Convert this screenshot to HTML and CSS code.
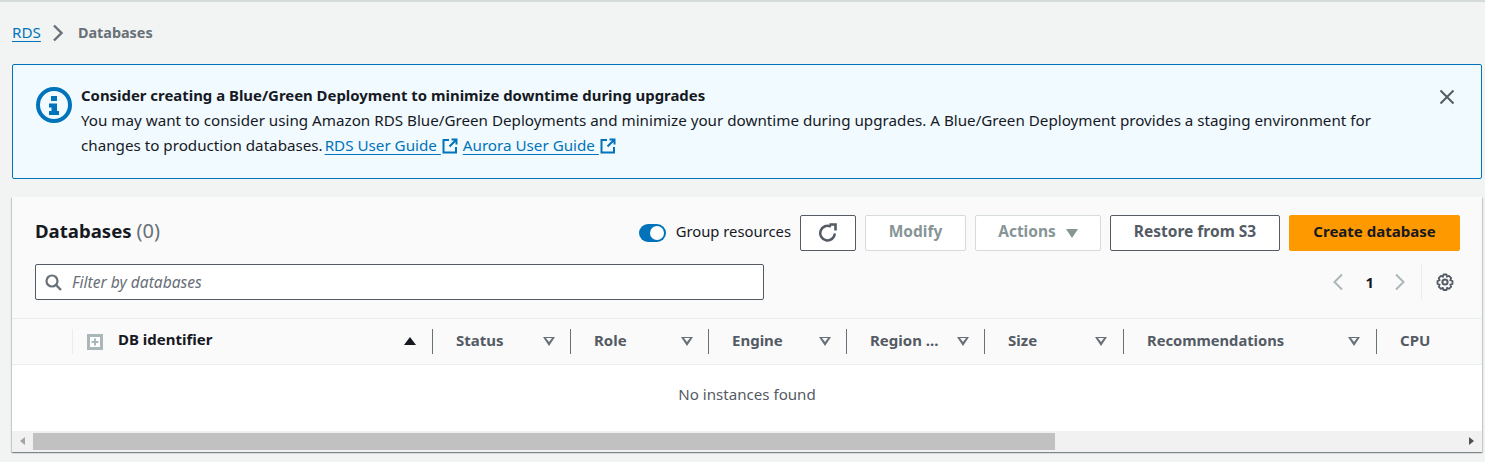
FILE: index.html
```html
<!DOCTYPE html>
<html lang="en">
<head>
    <meta charset="UTF-8">
    <title>Databases</title>
    <link rel="stylesheet" href="styles.css">
</head>
<body>
    <nav class="breadcrumb">
        <a href="#">RDS</a>
        <svg class="crumb-arrow" width="12" height="18" viewBox="0 0 12 18"><path d="M2 1.500 9.500 9 2 16.500" fill="none" stroke="#687078" stroke-width="2.400"/></svg>
        <span class="crumb-current">Databases</span>
    </nav>

    <div class="flash">
        <svg class="flash-icon" width="36" height="36" viewBox="0 0 36 36">
            <circle cx="18" cy="18" r="16" fill="none" stroke="#0073bb" stroke-width="4"/>
            <rect x="15" y="9" width="6" height="5" fill="#0073bb"/>
            <path d="M13 16.500h8V24h2v4H13v-4h2.500v-3.500H13z" fill="#0073bb"/>
        </svg>
        <div class="flash-body">
            <div class="flash-title">Consider creating a Blue/Green Deployment to minimize downtime during upgrades</div>
            <div class="flash-text">You may want to consider using Amazon RDS Blue/Green Deployments and minimize your downtime during upgrades. A Blue/Green Deployment provides a staging environment for</div>
            <div class="flash-text">
                <span class="flash-lead">changes to production databases.</span>
                <a href="#">RDS User Guide <svg class="ext" width="16" height="16" viewBox="0 0 16 16"><path d="M7 2H1.500v12.500H14V9M9.500 1.500H14.500V6.500M14 2 7.500 8.500" fill="none" stroke="#0073bb" stroke-width="2"/></svg></a>
                <a href="#">Aurora User Guide <svg class="ext" width="16" height="16" viewBox="0 0 16 16"><path d="M7 2H1.500v12.500H14V9M9.500 1.500H14.500V6.500M14 2 7.500 8.500" fill="none" stroke="#0073bb" stroke-width="2"/></svg></a>
            </div>
        </div>
        <svg class="flash-close" width="16" height="16" viewBox="0 0 16 16"><path d="M1.500 1.500l13 13M14.500 1.500l-13 13" fill="none" stroke="#545b64" stroke-width="2"/></svg>
    </div>

    <section class="card">
        <div class="card-header">
            <div class="title-row">
                <h2>Databases <span class="count">(0)</span></h2>
                <div class="actions">
                    <span class="toggle"><span class="knob"></span></span>
                    <span class="toggle-label">Group resources</span>
                    <button class="btn btn-icon">
                        <svg width="20" height="20" viewBox="0 0 20 20"><path d="M16.800 10.500A7.300 7.300 0 1 1 13 3.700" fill="none" stroke="#545b64" stroke-width="2.600"/><path d="M11.500 1.500h6v6" fill="none" stroke="#545b64" stroke-width="2.600"/></svg>
                    </button>
                    <button class="btn btn-disabled btn-modify">Modify</button>
                    <button class="btn btn-disabled btn-actions">Actions <span class="caret"></span></button>
                    <button class="btn btn-restore">Restore from S3</button>
                    <button class="btn btn-primary">Create database</button>
                </div>
            </div>
            <div class="filter-row">
                <div class="filter">
                    <svg width="17" height="17" viewBox="0 0 17 17"><circle cx="7" cy="7" r="5.500" fill="none" stroke="#687078" stroke-width="2.200"/><path d="M11 11 16 16" stroke="#687078" stroke-width="2.400"/></svg>
                    <span>Filter by databases</span>
                </div>
                <div class="pager">
                    <svg width="12" height="18" viewBox="0 0 12 18"><path d="M10 1.500 2.500 9l7.500 7.500" fill="none" stroke="#aab7b8" stroke-width="2"/></svg>
                    <span class="page-num">1</span>
                    <svg width="12" height="18" viewBox="0 0 12 18"><path d="M2 1.500 9.500 9 2 16.500" fill="none" stroke="#aab7b8" stroke-width="2"/></svg>
                    <span class="pager-sep"></span>
                    <svg width="18" height="18" viewBox="0 0 18 18">
                        <circle cx="9" cy="9" r="2.600" fill="none" stroke="#545b64" stroke-width="2"/>
                        <path d="M7.500 1.500h3l.5 2.300 2-.9 2.200 2.200-1 2 2.300.9v3l-2.300.6 1 2-2.200 2.200-2-1-.5 2.200h-3l-.6-2.200-2 1-2.200-2.200 1-2-2.200-.6V8l2.200-.9-1-2L4.900 2.900l2 .9z" fill="none" stroke="#545b64" stroke-width="1.800" stroke-linejoin="round"/>
                    </svg>
                </div>
            </div>
        </div>

        <div class="table-head">
            <div class="th th-select"></div>
            <div class="th th-id">
                <svg class="expand-all" width="16" height="16" viewBox="0 0 16 16"><rect x="1.500" y="1.500" width="13" height="13" fill="#fff" stroke="#aab7b8" stroke-width="3"/><path d="M8 4.500v7M4.500 8h7" stroke="#aab7b8" stroke-width="2"/></svg>
                <span class="th-label">DB identifier</span>
                <span class="sort-up"></span>
            </div>
            <div class="th th-std"><span class="th-label">Status</span><span class="sort"></span></div>
            <div class="th th-std"><span class="th-label">Role</span><span class="sort"></span></div>
            <div class="th th-std"><span class="th-label">Engine</span><span class="sort"></span></div>
            <div class="th th-std"><span class="th-label">Region ...</span><span class="sort"></span></div>
            <div class="th th-size"><span class="th-label">Size</span><span class="sort"></span></div>
            <div class="th th-rec"><span class="th-label">Recommendations</span><span class="sort"></span></div>
            <div class="th th-cpu"><span class="th-label">CPU</span></div>
        </div>
        <div class="table-empty">No instances found</div>

        <div class="hscroll">
            <span class="scroll-left"></span>
            <span class="scroll-thumb"></span>
            <span class="scroll-right"></span>
        </div>
    </section>
</body>
</html>
```

FILE: styles.css
```css
html, body {
    height: 100%;
}

body {
    margin: 0;
    padding: 0 3px 0 12px;
    box-sizing: border-box;
    overflow: hidden;
    border-top: 2px solid #d5dbdb;
    background-color: #f2f3f3;
    color: #16191f;
    font-family: "Noto Sans", "Open Sans", sans-serif;
    font-size: 14.800px;
    line-height: 21px;
}

a {
    color: #0073bb;
    text-decoration: underline;
    text-underline-offset: 3px;
}

.breadcrumb {
    display: flex;
    align-items: center;
    height: 21px;
    padding-top: 20px;
    margin-bottom: 21px;
    font-size: 15.200px;
}

.crumb-arrow {
    margin: 0 14px 0 11px;
}

.crumb-current {
    color: #687078;
    font-size: 14.400px;
    font-weight: 700;
}

.flash {
    display: flex;
    height: 113px;
    border: 1px solid #0073bb;
    border-radius: 2px;
    background-color: #f1faff;
}

.flash-icon {
    flex: none;
    margin: 22px 9px 0 23px;
}

.flash-body {
    width: 1310px;
    padding-top: 18px;
    line-height: 25px;
}

.flash-title {
    font-size: 14.920px;
    font-weight: 700;
}

.flash-text {
    font-size: 15.200px;
    white-space: nowrap;
}

.flash-lead {
    margin-right: -2px;
}

.flash-close {
    margin: 24px 0 0 48px;
}

.ext {
    margin-left: 1px;
    margin-right: 1px;
    vertical-align: -3px;
}

.card {
    position: relative;
    margin-top: 18px;
    height: 255px;
    overflow: hidden;
    background-color: #fff;
    box-shadow: 0 1px 1px 0 rgba(0, 28, 36, 0.3), 1px 1px 1px 0 rgba(0, 28, 36, 0.15), -1px 1px 1px 0 rgba(0, 28, 36, 0.15);
}

.card-header {
    height: 122px;
    padding: 0 22px 0 23px;
    box-sizing: border-box;
    border-bottom: 1px solid #eaeded;
    background-color: #fafafa;
}

.title-row {
    display: flex;
    align-items: center;
    justify-content: space-between;
    padding-top: 18px;
    height: 36px;
}

h2 {
    margin: 0;
    padding-bottom: 4px;
    font-size: 18.600px;
    font-weight: 700;
    line-height: 32px;
}

.count {
    color: #687078;
    font-size: 20px;
    font-weight: 400;
}

.actions {
    display: flex;
    align-items: center;
}

.toggle {
    display: flex;
    justify-content: flex-end;
    align-items: center;
    width: 27px;
    height: 18px;
    padding-right: 2px;
    box-sizing: border-box;
    border-radius: 9px;
    background-color: #0073bb;
}

.knob {
    width: 14px;
    height: 14px;
    border-radius: 50%;
    background-color: #fff;
}

.toggle-label {
    margin: 0 9px 0 10px;
    padding-bottom: 4px;
}

.btn {
    height: 36px;
    margin-left: 9px;
    padding: 0 0 4px;
    box-sizing: border-box;
    border: 1px solid #545b64;
    border-radius: 2px;
    background-color: #fff;
    color: #545b64;
    font-family: inherit;
    font-size: 15.500px;
    font-weight: 700;
}

.btn-icon {
    display: flex;
    align-items: center;
    justify-content: center;
    width: 56px;
    margin-left: 0;
    padding: 0;
}

.btn-disabled {
    border-color: #d5dbdb;
    color: #879596;
}

.btn-modify {
    width: 101px;
}

.btn-actions {
    width: 126px;
}

.caret {
    display: inline-block;
    margin-left: 6px;
    border-left: 6.500px solid transparent;
    border-right: 6.500px solid transparent;
    border-top: 9px solid #879596;
    vertical-align: -1px;
}

.btn-restore {
    width: 170px;
}

.btn-primary {
    width: 171px;
    border-color: #ff9900;
    background-color: #ff9900;
    color: #16191f;
    font-size: 15px;
}

.filter-row {
    display: flex;
    justify-content: space-between;
    align-items: center;
    margin-top: 13px;
}

.filter {
    display: flex;
    align-items: center;
    gap: 10px;
    width: 729px;
    height: 36px;
    padding-left: 9px;
    box-sizing: border-box;
    border: 1px solid #545b64;
    border-radius: 2px;
    background-color: #fff;
    color: #687078;
    font-size: 15.600px;
    font-style: italic;
}

.pager {
    display: flex;
    align-items: center;
    height: 36px;
    margin-right: 6px;
}

.page-num {
    margin: 0 20px 0 22px;
    font-weight: 700;
}

.pager-sep {
    width: 1px;
    height: 36px;
    margin: 0 14px 0 15px;
    background-color: #eaeded;
}

.table-head {
    display: flex;
    height: 46px;
    box-sizing: border-box;
    border-bottom: 1px solid #eaeded;
    background-color: #fafafa;
    color: #545b64;
    font-size: 15px;
    font-weight: 700;
}

.th {
    position: relative;
    display: flex;
    align-items: center;
    justify-content: space-between;
    flex: none;
    box-sizing: border-box;
    height: 44px;
    padding: 0 16px 0 23px;
}

.th::after {
    content: "";
    position: absolute;
    top: 10px;
    right: 0;
    width: 1px;
    height: 25px;
    background-color: #687078;
}

.th-label {
    margin-top: -2px;
}

.th-select {
    width: 61px;
    padding: 0;
}

.th-select::after {
    background-color: #eaeded;
}

.th-id {
    width: 360px;
    padding: 0 17px 0 14px;
    color: #16191f;
}

.expand-all {
    flex: none;
    margin: 2px 15px 0 0;
}

.th-id .th-label {
    flex: 1;
    margin-top: -3px;
}

.th-std {
    width: 138px;
}

.th-size {
    width: 139px;
    padding-right: 17px;
}

.th-rec {
    width: 253px;
    padding-right: 17px;
    font-size: 14.700px;
}

.th-cpu {
    width: 106px;
}

.th-cpu::after {
    display: none;
}

.sort-up {
    border-left: 6px solid transparent;
    border-right: 6px solid transparent;
    border-bottom: 8px solid #16191f;
}

.sort {
    width: 0;
    height: 0;
    border-left: 6px solid transparent;
    border-right: 6px solid transparent;
    border-top: 9px solid #687078;
    position: relative;
}

.sort::after {
    content: "";
    position: absolute;
    left: -3px;
    top: -7.500px;
    border-left: 3px solid transparent;
    border-right: 3px solid transparent;
    border-top: 4.500px solid #fafafa;
}

.table-empty {
    height: 66px;
    line-height: 58px;
    text-align: center;
    color: #545b64;
    font-size: 15.100px;
}

.hscroll {
    position: absolute;
    left: 0;
    right: 0;
    bottom: 0;
    height: 21px;
    background-color: #f1f1f1;
}

.scroll-thumb {
    position: absolute;
    left: 21px;
    top: 2px;
    width: 1022px;
    height: 17px;
    background-color: #c1c1c1;
}

.scroll-left,
.scroll-right {
    position: absolute;
    top: 6px;
    border-top: 4px solid transparent;
    border-bottom: 4px solid transparent;
}

.scroll-left {
    left: 8px;
    border-right: 5px solid #a3a3a3;
}

.scroll-right {
    right: 8px;
    border-left: 5px solid #505050;
}
```
